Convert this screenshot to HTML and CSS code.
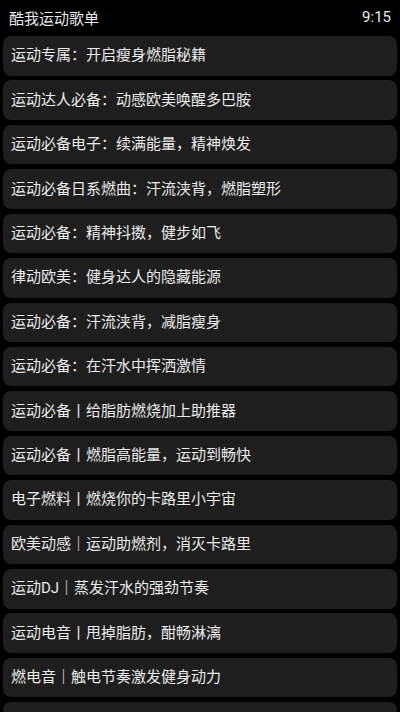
FILE: index.html
```html
<!DOCTYPE html>
<html lang="zh-CN">
<head>
  <meta charset="UTF-8">
  <meta name="viewport" content="width=device-width, initial-scale=1.0">
  <title>酷我运动歌单</title>
  <link rel="stylesheet" href="styles.css">
</head>
<body>
  <div class="top-bar">
    <span class="title">酷我运动歌单</span>
    <span class="clock">9:15</span>
  </div>

  <div class="list">
    <div class="item">运动专属：开启瘦身燃脂秘籍</div>
    <div class="item">运动达人必备：动感欧美唤醒多巴胺</div>
    <div class="item">运动必备电子：续满能量，精神焕发</div>
    <div class="item">运动必备日系燃曲：汗流浃背，燃脂塑形</div>
    <div class="item">运动必备：精神抖擞，健步如飞</div>
    <div class="item">律动欧美：健身达人的隐藏能源</div>
    <div class="item">运动必备：汗流浃背，减脂瘦身</div>
    <div class="item">运动必备：在汗水中挥洒激情</div>
    <div class="item">运动必备丨给脂肪燃烧加上助推器</div>
    <div class="item">运动必备丨燃脂高能量，运动到畅快</div>
    <div class="item">电子燃料丨燃烧你的卡路里小宇宙</div>
    <div class="item">欧美动感｜运动助燃剂，消灭卡路里</div>
    <div class="item">运动DJ｜蒸发汗水的强劲节奏</div>
    <div class="item">运动电音丨甩掉脂肪，酣畅淋漓</div>
    <div class="item">燃电音｜触电节奏激发健身动力</div>
    <!-- next row is scrolled just past the bottom edge -->
    <div class="item"></div>
  </div>
</body>
</html>
```

FILE: styles.css
```css
body {
  margin: 0;
  background-color: #000;
  color: #ebebeb;
  font-family: Roboto, "Noto Sans CJK SC", sans-serif;
  overflow: hidden;
  height: 712px;
}
.top-bar {
  display: flex;
  justify-content: space-between;
  align-items: center;
  height: 36px;
  padding: 0 9px 2px 9px;
  box-sizing: border-box;
  font-size: 15px;
}
.list {
  display: flex;
  flex-direction: column;
  gap: 4.93px;
  padding: 0 3px;
}
.item {
  flex: none;
  height: 39.5px;
  box-sizing: border-box;
  display: flex;
  align-items: center;
  padding: 0 0 1px 8px;
  background-color: #1e1e1e;
  border-radius: 8px;
  font-size: 15px;
  line-height: 20px;
  white-space: nowrap;
}
```
